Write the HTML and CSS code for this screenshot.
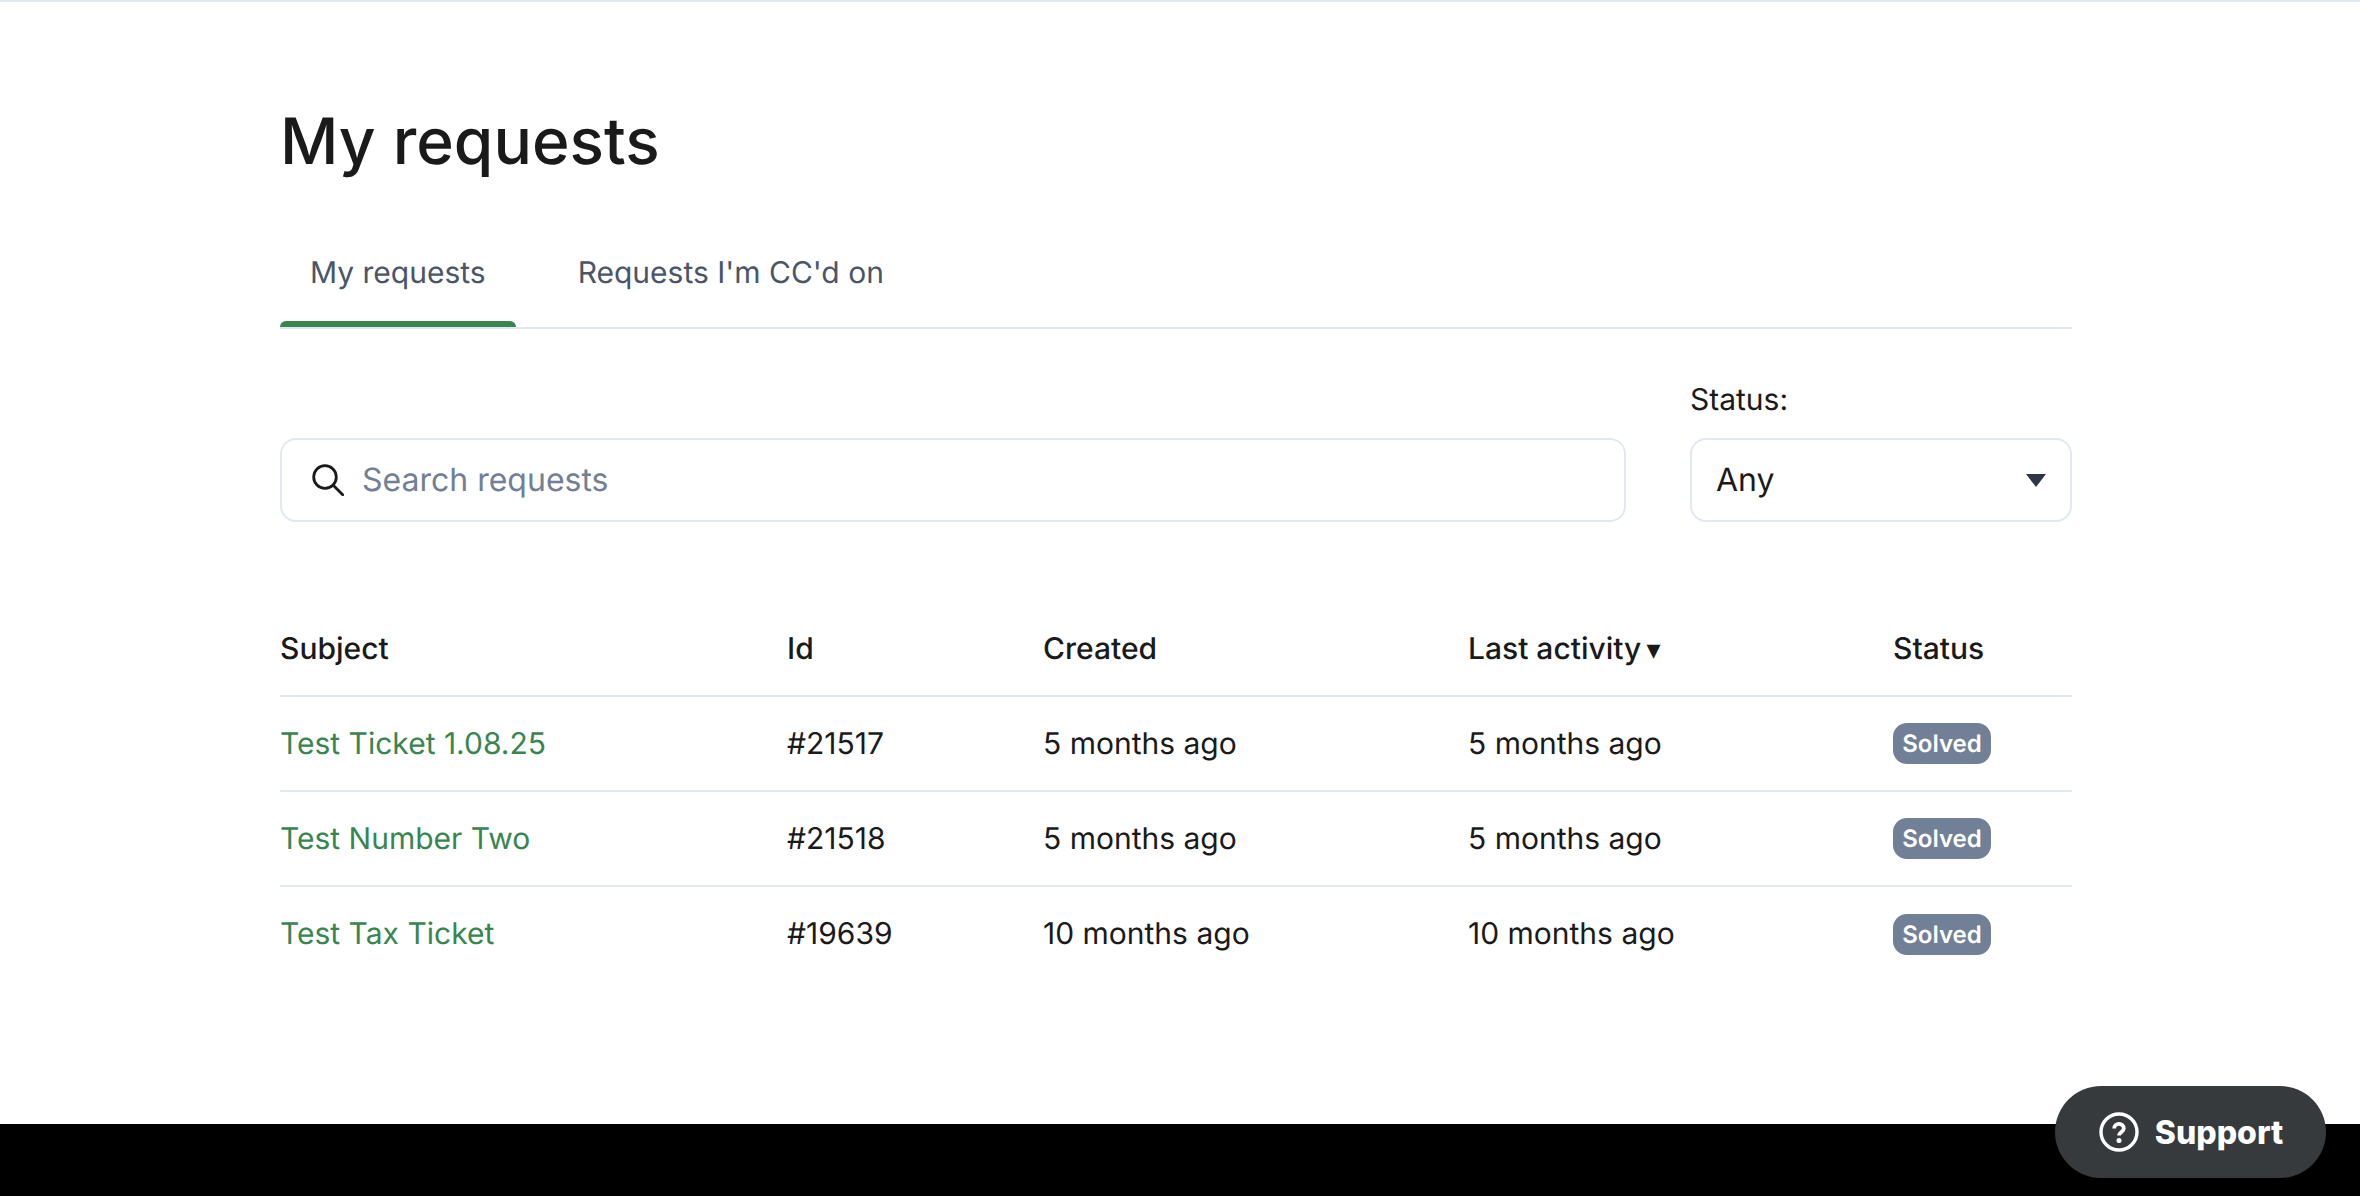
FILE: index.html
```html
<!DOCTYPE html>
<html lang="en">
<head>
<meta charset="utf-8">
<title>My requests</title>
<link rel="stylesheet" href="styles.css">
</head>
<body>
<main class="page">
  <h1 class="title">My requests</h1>
  <nav class="tabs">
    <a class="tab tab-active">My requests</a>
    <a class="tab">Requests I'm CC'd on</a>
  </nav>
  <form class="filters">
    <div class="search">
      <svg class="search-icon" viewBox="0 0 32 32" width="32" height="32" aria-hidden="true"><circle cx="13" cy="13" r="11.3" fill="none" stroke="#1a1a1a" stroke-width="2.8"/><path d="M21.5 21.5l9.2 9.2" stroke="#1a1a1a" stroke-width="2.8" stroke-linecap="round"/></svg>
      <span class="placeholder">Search requests</span>
    </div>
    <div class="status-filter">
      <label class="status-label">Status:</label>
      <div class="select">
        <span>Any</span>
        <svg class="caret" viewBox="0 0 20 13" width="20" height="13" aria-hidden="true"><path d="M0 0h20L10 13z" fill="#2d3748"/></svg>
      </div>
    </div>
  </form>
  <table class="requests">
    <colgroup>
      <col class="c1"><col class="c2"><col class="c3"><col class="c4"><col class="c5">
    </colgroup>
    <thead>
      <tr><th>Subject</th><th>Id</th><th>Created</th><th>Last activity <span class="sort">▾</span></th><th>Status</th></tr>
    </thead>
    <tbody>
      <tr><td><a class="link">Test Ticket 1.08.25</a></td><td>#21517</td><td>5 months ago</td><td>5 months ago</td><td><span class="badge">Solved</span></td></tr>
      <tr><td><a class="link">Test Number Two</a></td><td>#21518</td><td>5 months ago</td><td>5 months ago</td><td><span class="badge">Solved</span></td></tr>
      <tr><td><a class="link">Test Tax Ticket</a></td><td>#19639</td><td>10 months ago</td><td>10 months ago</td><td><span class="badge">Solved</span></td></tr>
    </tbody>
  </table>
</main>
<footer class="footer"></footer>
<button class="support" type="button">
  <svg viewBox="0 0 40 40" width="40" height="40" aria-hidden="true"><circle cx="20" cy="20" r="18" fill="none" stroke="#fff" stroke-width="3.4"/><path d="M15.2 16.6a4.8 4.8 0 0 1 9.6 0c0 3.2-4.8 3.6-4.8 7" fill="none" stroke="#fff" stroke-width="3.8"/><circle cx="20" cy="28.6" r="2.5" fill="#fff"/></svg>
  <span>Support</span>
</button>
</body>
</html>
```
FILE: styles.css
```css
* { box-sizing: border-box; }
html, body { margin: 0; height: 100%; }
body {
  height: 1196px;
  overflow: hidden;
  display: flex;
  flex-direction: column;
  background: #fff;
  color: #1a1a1a;
  font-family: Inter, "Liberation Sans", sans-serif;
  font-size: 30px;
  text-rendering: geometricPrecision;
  border-top: 2px solid #e2e8f0;
}
.page { flex: 1; width: 1792px; margin-left: 280px; }
.footer { height: 72px; background: #000; }
.title { margin: 0; padding-top: 95px; font-size: 64px; line-height: 90px; font-weight: 500; height: 186px; }
.tabs { display: flex; gap: 32px; height: 141px; border-bottom: 2px solid #e2e8f0; }
.tab { display: flex; align-items: center; height: 139px; padding: 30px 30px 0; color: #4a5568; font-size: 30px; }
.tab-active { position: relative; }
.tab-active::after { content: ""; position: absolute; left: 0; right: 0; bottom: 0; height: 6px; background: #38854f; border-radius: 6px 6px 0 0; }
.filters { display: flex; justify-content: space-between; align-items: flex-end; margin-top: 53px; }
.search { width: 1346px; height: 84px; border: 2px solid #e2e8f0; border-radius: 16px; display: flex; align-items: center; padding-left: 30px; gap: 18px; }
.placeholder { color: #718096; font-size: 32px; line-height: 38px; padding-bottom: 1px; }
.status-filter { width: 382px; }
.status-label { display: block; margin-bottom: 20px; font-size: 30px; line-height: 36px; }
.select { height: 84px; border: 2px solid #e2e8f0; border-radius: 16px; display: flex; align-items: center; justify-content: space-between; padding: 0 24px; font-size: 32px; line-height: 38px; }
.requests { width: 1792px; table-layout: fixed; border-collapse: collapse; margin-top: 84px; }
.c1 { width: 507px; } .c2 { width: 256px; } .c3 { width: 425px; } .c4 { width: 425px; } .c5 { width: 179px; }
th { text-align: left; font-weight: 500; height: 90px; font-size: 30px; padding: 0 0 3px; border-bottom: 2px solid #e2e8f0; }
td { height: 95px; padding: 0; font-size: 30px; border-bottom: 2px solid #e2e8f0; }
tbody tr:last-child td { border-bottom: 0; }
.sort { font-size: 28px; margin-left: -3px; }
.link { color: #38854f; }
.badge { display: inline-block; height: 41px; line-height: 41px; width: 98px; text-align: center; background: #718096; color: #fff; font-size: 24px; font-weight: 600; border-radius: 14px; vertical-align: middle; }
.support { position: fixed; left: 2055px; top: 1086px; width: 271px; height: 92px; border: 0; border-radius: 46px; background: #373a3d; color: #fff; display: flex; align-items: center; justify-content: center; gap: 16px; font-family: Inter, sans-serif; font-size: 32px; font-weight: 800; padding: 0 0 0 1px; }
```
